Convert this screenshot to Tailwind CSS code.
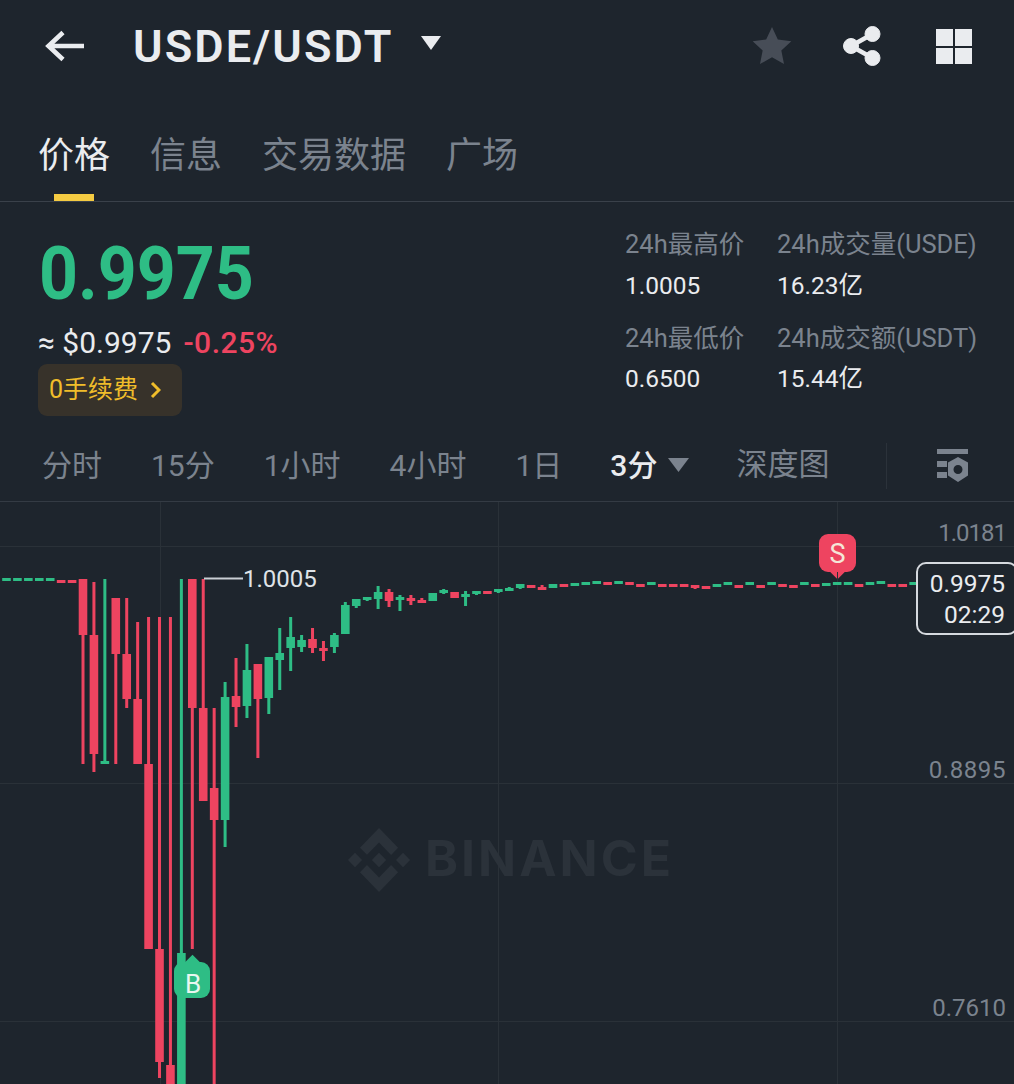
<!DOCTYPE html>
<html lang="zh">

<head>
  <meta charset="UTF-8">
  <meta name="viewport" content="width=device-width, initial-scale=1.0">
  <title>USDE/USDT</title>
  <script src="https://cdn.jsdelivr.net/npm/@tailwindcss/browser@4"></script>
</head>

<body class="bg-[#1e252d] text-[#eaecef] font-[family-name:Roboto,'Noto_Sans_CJK_SC',sans-serif] h-[1084px] overflow-hidden">
  <!-- Header -->
  <header class="h-[92px] flex items-center pl-[45px] pr-[42px]">
    <svg class="w-[40px] h-[32px]" viewBox="0 0 40 32" fill="none" stroke="#eaecef" stroke-width="4.6">
      <path d="M39 16H4M18 2.5 3.5 16 18 29.500" />
    </svg>
    <h1 class="ml-[48px] text-[45px] leading-none font-semibold tracking-[2.100px]">USDE/USDT</h1>
    <svg class="ml-[28px] w-[20px] h-[14px] -mt-[6px]" viewBox="0 0 20 14" fill="#eaecef">
      <path d="M0 0h20L10 14z" />
    </svg>
    <div class="ml-auto flex items-center">
      <svg class="w-[40px] h-[40px]" viewBox="0 0 24 24" fill="#474d57">
        <path d="M12 .6l3.500 7.500 8.100 1-6 5.600 1.600 8.100L12 18.800l-7.200 4 1.600-8.100-6-5.600 8.100-1z" />
      </svg>
      <svg class="ml-[51px] w-[38px] h-[40px]" viewBox="0 0 38 40" fill="#eaecef" stroke="#eaecef">
        <circle cx="29.500" cy="8" r="7.500" />
        <circle cx="8" cy="20" r="7.500" />
        <circle cx="29.500" cy="32" r="7.500" />
        <path d="M29.500 8 8 20l21.500 12" fill="none" stroke-width="4.500" />
      </svg>
      <div class="ml-[55px] mt-[1px] grid grid-cols-2 gap-[2px] w-[36px]">
        <div class="h-[16.500px] bg-[#eaecef]"></div>
        <div class="h-[16.500px] bg-[#eaecef]"></div>
        <div class="h-[16.500px] bg-[#eaecef]"></div>
        <div class="h-[16.500px] bg-[#eaecef]"></div>
      </div>
    </div>
  </header>

  <!-- Tabs -->
  <nav class="h-[110px] border-b border-[#3a414a] pl-[38px] flex gap-[40px] text-[36px] leading-none text-[#7b838e]">
    <div class="relative h-full pt-[46px] text-[#eaecef]">价格
      <div class="absolute left-[16px] bottom-0 w-[40px] h-[7px] bg-[#f5cb42]"></div>
    </div>
    <div class="pt-[46px]">信息</div>
    <div class="pt-[46px]">交易数据</div>
    <div class="pt-[46px]">广场</div>
  </nav>

  <!-- Price and 24h stats -->
  <section class="h-[238px] flex">
    <div class="w-[625px] pl-[38px]">
      <div class="mt-[33px] ml-[1px] text-[68px] leading-[78px] font-bold text-[#2ebd85] scale-y-[1.1] origin-center">0.9975</div>
      <div class="mt-[13px] flex gap-[12px] text-[30px] leading-[34px]">
        <span>≈ $0.9975</span>
        <span class="text-[#ee4460] font-medium tracking-[0.500px]">-0.25%</span>
      </div>
      <div class="mt-[4px] w-[144px] h-[52px] rounded-[9px] bg-[#37322a] pl-[11px] flex items-center text-[25px] text-[#f0bd2a]">
        0手续费
        <svg class="ml-[11px] w-[12px] h-[18px]" viewBox="0 0 12 18" fill="none" stroke="#f0bd2a" stroke-width="3">
          <path d="M3 2l7 7-7 7" />
        </svg>
      </div>
    </div>
    <div class="grid grid-cols-[152px_1fr] text-[24.500px] leading-[30px] mt-[27px] h-fit">
      <div class="text-[25.500px] text-[#7b838e]">24h最高价</div>
      <div class="text-[25.500px] text-[#7b838e]">24h成交量(USDE)</div>
      <div class="mt-[12px]">1.0005</div>
      <div class="mt-[12px]">16.23亿</div>
      <div class="mt-[22px] text-[25.500px] text-[#7b838e]">24h最低价</div>
      <div class="mt-[22px] text-[25.500px] text-[#7b838e]">24h成交额(USDT)</div>
      <div class="mt-[11px]">0.6500</div>
      <div class="mt-[11px]">15.44亿</div>
    </div>
  </section>

  <!-- Intervals -->
  <div class="relative h-[62px] border-b border-[#343b44] pl-[42px] flex items-center text-[30px] text-[#7b838e] pb-[10px]">
    <span>分时</span>
    <span class="ml-[49px]">15分</span>
    <span class="ml-[49px]">1小时</span>
    <span class="ml-[49px]">4小时</span>
    <span class="ml-[49px]">1日</span>
    <span class="ml-[48px] text-[#eaecef] font-medium">3分</span>
    <svg class="ml-[11px] w-[21px] h-[14px] -mt-[2px]" viewBox="0 0 21 14" fill="#7b838e">
      <path d="M0 0h21L10.500 14z" />
    </svg>
    <span class="ml-[47px] text-[31px]">深度图</span>
    <div class="ml-[57px] w-px h-[46px] bg-[#2b323a]"></div>
    <svg class="ml-[49px] w-[36px] h-[34px]" viewBox="0 0 36 34" fill="#7b838e">
      <path d="M1 0h31v5H1zM1 12h10v6H1zM1 23h10v6H1z" />
      <path fill-rule="evenodd" d="M22 8l10 5.500v13L22 33l-10-6.500v-13zM22 16a4.500 4.500 0 1 0 0 9 4.500 4.500 0 0 0 0-9z" />
    </svg>
  </div>

  <!-- Chart -->
  <main class="relative h-[582px] overflow-hidden">
    <svg id="chart" class="absolute inset-0 w-full h-full" viewBox="0 502 1014 582">
      <g stroke="#2a3138" stroke-width="1">
        <path d="M0 546.500H1014M0 783.500H1014M0 1021.500H1014M160.500 502V1084M498.500 502V1084M837.500 502V1084" />
      </g>
      <g fill="#2b323a">
        <path transform="translate(348 828) scale(.49 .505)" d="M38.730 53.200l24.590-24.580 24.600 24.600 14.300-14.310L63.320 0 24.420 38.900zM0 63.310l14.300-14.310 14.310 14.310-14.310 14.300zM38.730 73.410l24.590 24.590 24.600-24.600 14.310 14.290-38.900 38.910-38.910-38.880-.02-.02zM98 63.310l14.300-14.310 14.310 14.300-14.310 14.320zM77.830 63.300L63.320 48.780 52.590 59.510l-1.240 1.230-2.540 2.540 14.510 14.500 14.510-14.470z" />
      </g>
      <g id="candles"></g>
      <path d="M204 578.500H243" stroke="#c9ced4" stroke-width="2" />
    </svg>

    <div class="absolute left-[425px] top-[331px] text-[50px] leading-[50px] font-bold font-[family-name:Inter,sans-serif] tracking-[3px] text-[#2b323a]">BINANCE</div>

    <div class="absolute left-[243px] top-[62px] text-[24px] leading-[30px] text-[#dfe3e7]">1.0005</div>

    <div class="absolute right-[8px] top-[16px] text-[24px] leading-[30px] tracking-[-1px] text-[#7b838e]">1.0181</div>
    <div class="absolute right-[8px] top-[253px] text-[24px] leading-[30px] tracking-[0.600px] text-[#7b838e]">0.8895</div>
    <div class="absolute right-[8px] top-[491px] text-[24px] leading-[30px] text-[#7b838e]">0.7610</div>

    <!-- Current price tag -->
    <div class="absolute left-[916px] -right-[4px] top-[60px] h-[73px] bg-[#1e252d] border-2 border-[#d5d9de] rounded-[10px] pr-[11px] flex flex-col justify-center items-end text-[24.500px] leading-[31px]">
      <div>0.9975</div>
      <div>02:29</div>
    </div>

    <!-- Sell marker -->
    <div class="absolute left-[819px] top-[32px] w-[37px] h-[38px] pt-[3px] rounded-[9px] bg-[#ee4460] flex items-center justify-center text-[27px] text-[#f5e6d8]">S
      <div class="absolute left-[13px] -bottom-[5px] w-[11px] h-[11px] rotate-45 bg-[#ee4460] -z-10"></div>
    </div>

    <!-- Buy marker -->
    <div class="absolute left-[174px] top-[460px] w-[36px] h-[36px] pt-[8px] pl-[2px] rounded-[9px] bg-[#2ebd85] flex items-center justify-center text-[26px] text-[#e8f7f0]">B
      <div class="absolute left-[13px] -top-[5px] w-[11px] h-[11px] rotate-45 bg-[#2ebd85] -z-10"></div>
    </div>
  </main>

  <script>
    const GREEN = '#2ebd85';
    const RED = '#ee4460';
    const STEP = 10.93;
    const FIRST_X = 83;

    // color, body top, body bottom, wick top, wick bottom (wick optional)
    const candles = [
      // flat line before the drop, index -7 to -1
      ['g', 578, 580], ['g', 578, 580], ['g', 578, 580], ['g', 578, 580], ['g', 578, 580],
      ['r', 580, 582], ['r', 580, 582],
      // the drop
      ['r', 579, 635, 579, 764], ['r', 635, 754, 582, 772], ['g', 761, 764, 579, 764],
      ['r', 598, 654, 598, 764], ['r', 654, 699, 598, 708], ['r', 699, 764, 622, 764],
      ['r', 764, 949, 617, 949], ['r', 949, 1062, 617, 1078], ['r', 1065, 1100, 617, 1100],
      ['g', 953, 1100, 579, 1100], ['r', 579, 708, 579, 949], ['r', 708, 801, 579, 801],
      ['r', 788, 820, 708, 1100], ['g', 697, 820, 682, 847], ['r', 696, 707, 658, 727],
      ['g', 670, 706, 644, 718], ['r', 664, 699, 664, 758], ['g', 657, 698, 657, 714],
      ['g', 653, 660, 628, 690], ['g', 637, 648, 617, 671], ['g', 640, 647, 635, 652],
      ['r', 639, 648, 628, 653], ['r', 648, 650, 641, 661], ['g', 635, 647, 633, 653],
      ['g', 605, 634, 602, 634],
      // recovery
      ['g', 599, 606, 599, 608], ['g', 597, 600, 597, 601], ['g', 592, 599, 586, 609],
      ['r', 592, 601, 589, 607], ['g', 597, 599, 595, 611], ['r', 598, 600, 595, 605],
      ['r', 600, 602, 598, 602], ['g', 593, 601], ['g', 590, 592, 589, 594],
      ['r', 592, 598], ['g', 594, 597, 591, 606], ['g', 591, 593, 591, 595],
      ['r', 591, 593], ['g', 589, 591, 589, 593], ['g', 588, 590, 587, 591],
      ['g', 584, 588, 584, 589], ['r', 585, 587], ['r', 587, 589, 585, 589],
      ['g', 584, 588], ['r', 584, 586], ['g', 583, 585], ['g', 582, 584],
      ['g', 581, 583], ['r', 582, 584], ['g', 581, 583], ['r', 582, 584],
      ['r', 584, 586], ['g', 582, 584], ['r', 584, 586],
      // flat tail
      ['r', 584, 586], ['r', 584, 586], ['r', 585, 587, 585, 589], ['r', 586, 588],
      ['g', 584, 586], ['g', 582, 584], ['r', 585, 587], ['g', 582, 584],
      ['r', 585, 587], ['g', 582, 584], ['r', 584, 586], ['r', 585, 587],
      ['g', 582, 584], ['r', 584, 586], ['g', 583, 585], ['g', 582, 584],
      ['g', 582, 584], ['r', 584, 586], ['g', 582, 584], ['g', 581, 583],
      ['r', 584, 586], ['r', 584, 586], ['g', 582, 584]
    ];

    const svgNS = 'http://www.w3.org/2000/svg';
    const group = document.getElementById('candles');

    function addRect(x, y, w, h, fill) {
      const r = document.createElementNS(svgNS, 'rect');
      r.setAttribute('x', x);
      r.setAttribute('y', y);
      r.setAttribute('width', w);
      r.setAttribute('height', h);
      r.setAttribute('fill', fill);
      group.appendChild(r);
    }

    candles.forEach((c, i) => {
      const x = FIRST_X + (i - 7) * STEP;
      const color = c[0] === 'g' ? GREEN : RED;
      if (c[3] !== undefined) addRect(x - 1.5, c[3], 3, c[4] - c[3], color);
      // doji bodies read as thick dashes in the reference
      const h = Math.max(c[2] - c[1], 3);
      addRect(x - 4.3, c[1], 8.6, h, color);
    });
  </script>
</body>

</html>
